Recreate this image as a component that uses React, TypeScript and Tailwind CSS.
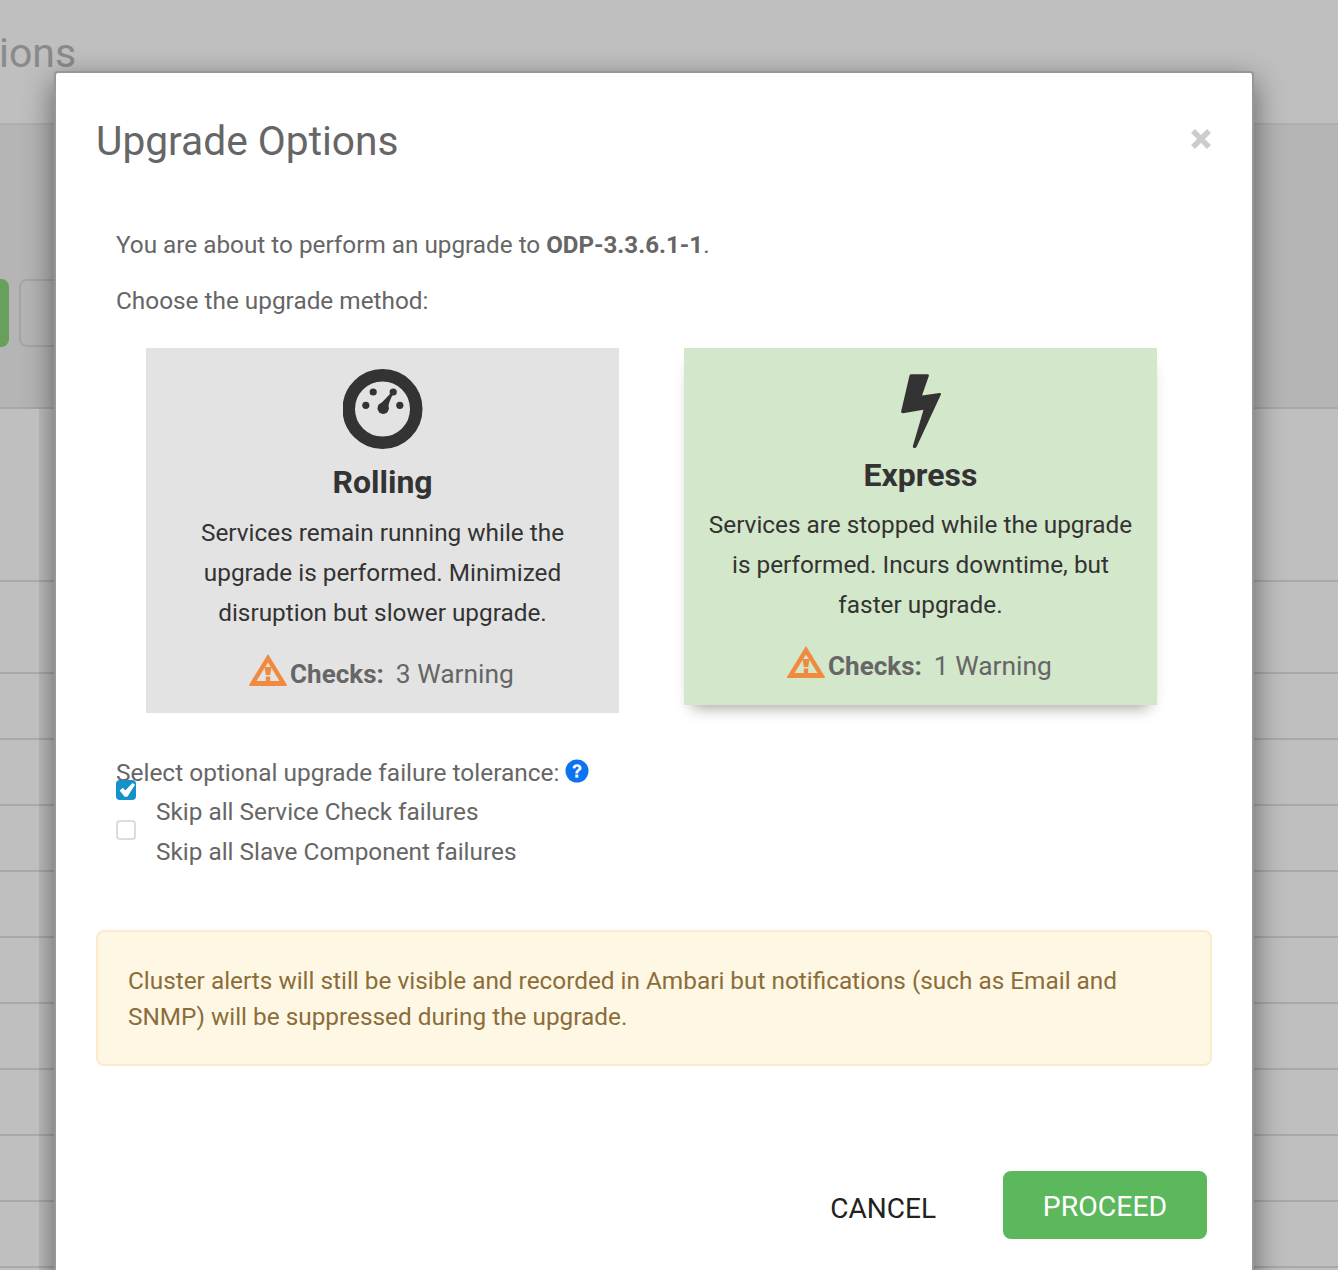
const rows = [173, 92, 66, 66, 66, 66, 66, 66, 66, 66, 66];

function Rows() {
  return (
    <>
      {rows.map((h, i) => (
        <div key={i} style={{ height: h }} className="border-b-2 border-[#a6a9ad]" />
      ))}
    </>
  );
}

function Gauge() {
  return (
    <svg width="80" height="80" viewBox="0 0 80 80" className="block">
      <circle cx="39.5" cy="40" r="33.75" fill="none" stroke="#333333" strokeWidth="12.5" />
      <circle cx="40.2" cy="39.3" r="5.7" fill="#333333" />
      <path d="M36 36 Q41.5 31 49.2 22.4 L51.2 23.6 Q45.5 32 44.5 42 Z" fill="#333333" />
      <circle cx="50.2" cy="23" r="3.6" fill="#333333" />
      <circle cx="30.2" cy="23" r="3.6" fill="#333333" />
      <circle cx="22.8" cy="36.3" r="3.6" fill="#333333" />
      <circle cx="56.8" cy="36.3" r="3.6" fill="#333333" />
    </svg>
  );
}

function Bolt() {
  return (
    <svg width="40" height="74" viewBox="0 0 40 74" className="block">
      <path
        d="M10 0.3 L26.5 0.3 Q28.3 0.3 27.8 2 L21 21.6 L38.5 19 Q40.6 18.8 39.8 20.8 L15.5 73 Q14 74.8 12.5 73.8 Q11.5 73 12 71.5 L22.5 35.8 L2 39.2 Q-0.2 39.4 0.2 37.2 L8.5 1.5 Q9 0.3 10 0.3 Z"
        fill="#333333"
      />
    </svg>
  );
}

function WarnIcon() {
  return (
    <svg width="38" height="32" viewBox="0 0 38 32" className="block shrink-0 mt-[-8px]">
      <path
        fillRule="evenodd"
        d="M19 0 L38 31 Q38 32 37 32 L1 32 Q0 32 0 31 Z M19 8.5 L7.5 27 L30.5 27 Z"
        fill="#ef8a3f"
      />
      <path d="M15.5 13 L22.5 13 L21.2 21 L16.8 21 Z" fill="#ef8a3f" />
      <rect x="16.8" y="22.5" width="4.4" height="5" fill="#ef8a3f" />
    </svg>
  );
}

function MethodCard({
  icon,
  iconBox,
  title,
  text,
  textGap,
  bottom,
  count,
  bg,
  shadow,
}: {
  icon: React.ReactNode;
  iconBox: string;
  title: string;
  text: string[];
  textGap: string;
  bottom: string;
  count: string;
  bg: string;
  shadow: string;
}) {
  return (
    <div className={`w-[473px] flex flex-col items-center ${bg} ${shadow}`}>
      <div className={`flex items-center justify-center ${iconBox}`}>{icon}</div>
      <h3 className="text-[32px] leading-[40px] font-bold text-[#333333] mt-[-1px]">{title}</h3>
      <div className={`${textGap} text-[24.35px] leading-[40px] text-[#333333] text-center`}>
        {text.map((t) => (
          <div key={t}>{t}</div>
        ))}
      </div>
      <div className={`mt-[21px] ${bottom} mr-[2px] flex items-center h-[40px] text-[#666666] text-[26px]`}>
        <WarnIcon />
        <span className="ml-[3px] font-bold">Checks:</span>
        <span className="ml-[12px] text-[26.4px]">{count} Warning</span>
      </div>
    </div>
  );
}

export default function App() {
  return (
    <div className="relative h-[1270px] w-[1338px] overflow-hidden bg-[#bfbfbf] font-['Roboto',sans-serif]">
      {/* dimmed page behind the dialog */}
      <div className="h-[125px] border-b-2 border-[#aeaeae] text-[41px] leading-[50px] text-[#8a8a8a] pt-[28px] ml-[-1px]">
        ions
      </div>
      <div className="h-[284px] bg-[#b5b5b5] border-b-2 border-[#a6a8ab] pt-[154px] flex gap-[10px] ml-[-21px]">
        <div className="w-[30px] h-[68px] rounded-[8px] bg-[#66a05c]" />
        <div className="w-[120px] h-[68px] rounded-[8px] border-2 border-[#a5a5a5]" />
      </div>
      <Rows />

      {/* dialog */}
      <div className="absolute left-[54px] top-[71px] w-[1200px] h-[1260px] bg-white border-2 border-[#979797] rounded-[4px] shadow-[0_10px_30px_rgba(0,0,0,0.5)] px-[40px] text-[#666666]">
        <div className="flex items-start justify-between">
          <h2 className="text-[40.7px] leading-[48px] text-[#666666] mt-[44px]">Upgrade Options</h2>
          <svg width="20" height="20" viewBox="0 0 20 20" className="mt-[56px] mr-[1px] block">
            <path d="M2 2 L18 18 M18 2 L2 18" stroke="#cccccc" strokeWidth="5.5" />
          </svg>
        </div>

        <div className="px-[20px] pt-[62px] text-[24.35px] leading-[36px]">
          <p className="text-[24.3px]">
            You are about to perform an upgrade to <b className="text-[24.1px]">ODP-3.3.6.1-1</b>.
          </p>
          <p className="mt-[20px]">Choose the upgrade method:</p>

          <div className="mt-[29px] flex items-start gap-[65px] pl-[30px]">
            <MethodCard
              icon={<Gauge />}
              iconBox="pt-[21px] pb-[14px]"
              title="Rolling"
              text={["Services remain running while the", "upgrade is performed. Minimized", "disruption but slower upgrade."]}
              textGap="mt-[11px]"
              bottom="mb-[19px]"
              count="3"
              bg="bg-[#e3e3e3]"
              shadow=""
            />
            <MethodCard
              icon={<Bolt />}
              iconBox="pt-[26px] pb-[8px]"
              title="Express"
              text={["Services are stopped while the upgrade", "is performed. Incurs downtime, but", "faster upgrade."]}
              textGap="mt-[10px]"
              bottom="mb-[19px]"
              count="1"
              bg="bg-[#d3e7ca]"
              shadow="shadow-[0_10px_15px_-8px_rgba(0,0,0,0.4)]"
            />
          </div>

          <div className="mt-[42px] flex items-center h-[36px]">
            <span className="text-[24.45px]">Select optional upgrade failure tolerance:</span>
            <svg width="24" height="24" viewBox="0 0 24 24" className="ml-[6px] mt-[-4px] block">
              <circle cx="12" cy="12" r="11.5" fill="#0a74f0" />
              <path d="M7.6 9.2 C7.6 6.6 9.8 5.2 12.1 5.2 C14.6 5.2 16.6 6.8 16.6 9 C16.6 11.8 13.2 11.8 13.2 14.4 L10.4 14.4 C10.4 10.8 13.6 10.8 13.6 9.1 C13.6 8.2 13 7.8 12.1 7.8 C11.1 7.8 10.5 8.4 10.4 9.4 Z" fill="#ffffff" />
              <rect x="10.3" y="15.6" width="3" height="3" fill="#ffffff" />
            </svg>
          </div>

          <div className="relative flex flex-col gap-[4px] mt-[3px] pl-[40px]">
            <span>Skip all Service Check failures</span>
            <span>Skip all Slave Component failures</span>
            <span className="absolute left-0 top-[-14px] w-[20px] h-[20px] rounded-[4px] bg-[#1491c8]">
              <svg width="20" height="20" viewBox="0 0 20 20" className="block">
                <path d="M3.6 10.6 L7 7.8 L9.2 10.6 L16.6 3 L19 4.8 L11.4 16.8 L8.6 16.8 Z" fill="#ffffff" />
              </svg>
            </span>
            <span className="absolute left-0 top-[26px] w-[20px] h-[20px] rounded-[4px] bg-white border-2 border-[#dcdcdc]" />
          </div>
        </div>

        <div className="mt-[60px] h-[136px] rounded-[8px] border-2 border-[#fbeacd] bg-[#fef7e3] px-[30px] pt-[31px] text-[24.35px] leading-[36px] text-[#8a6d3b]">
          Cluster alerts will still be visible and recorded in Ambari but notifications (such as Email and
          <br />
          SNMP) will be suppressed during the upgrade.
        </div>

        <div className="mt-[105px] flex items-center justify-end pr-[5px]">
          <button className="text-[28px] text-[#222222] mr-[67px] mt-[7px]">CANCEL</button>
          <button className="w-[204px] h-[68px] rounded-[8px] bg-[#5cb85c] text-white text-[28.4px] pt-[5px]">PROCEED</button>
        </div>
      </div>

      {/* left strip of the page sits above the dialog's shadow */}
      <div className="absolute left-0 top-[409px] w-[39px] h-[861px] bg-[#bfbfbf]">
        <Rows />
      </div>
    </div>
  );
}
